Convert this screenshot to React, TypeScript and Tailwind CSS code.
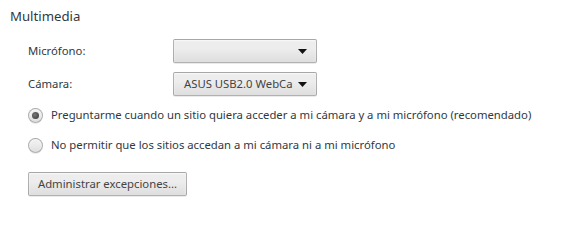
import React from "react";

const ctrl =
  "border border-[rgba(0,0,0,0.25)] rounded-[2px] bg-[linear-gradient(#ededed,#ededed_38%,#dedede)] shadow-[0_1px_0_rgba(0,0,0,0.08),inset_0_1px_2px_rgba(255,255,255,0.75)] text-[#444]";

function Select({ value }: { value: string }) {
  return (
    <div className={`${ctrl} w-[144px] h-[24px] flex items-center pl-[10px] pr-[9px]`}>
      <span className="flex-1 whitespace-nowrap text-[11.3px]">{value}</span>
      <svg width="9" height="5" viewBox="0 0 9 5" className="shrink-0 ml-[4px]">
        <path d="M0 0H9L4.5 5Z" fill="#111" />
      </svg>
    </div>
  );
}

function Radio({ checked, label }: { checked?: boolean; label: string }) {
  return (
    <div className="flex items-center h-[16px]">
      <div className="w-[15px] h-[15px] rounded-full border border-[rgba(0,0,0,0.25)] bg-[linear-gradient(#ededed,#ededed_38%,#dedede)] shadow-[0_1px_0_rgba(0,0,0,0.08),inset_0_1px_2px_rgba(255,255,255,0.75)] flex items-center justify-center">
        {checked && (
          <div className="w-[7px] h-[7px] rounded-full bg-[radial-gradient(circle_at_40%_40%,#777,#333)]" />
        )}
      </div>
      <span className="ml-[8px] text-[11.3px] text-[#303942] whitespace-nowrap">{label}</span>
    </div>
  );
}

export default function App() {
  return (
    <div
      className="w-[561px] h-[206px] bg-white text-[#303942] pl-[10px] pt-[7px]"
      style={{ fontFamily: '"Noto Sans", "Open Sans", sans-serif' }}
    >
      <div className="text-[13.2px] leading-[18px]">Multimedia</div>
      <div className="pl-[18px] mt-[14px] flex flex-col">
        <div className="flex items-center h-[24px]">
          <span className="w-[145px] text-[11.3px]">Micrófono:</span>
          <Select value="" />
        </div>
        <div className="flex items-center h-[24px] mt-[9px]">
          <span className="w-[145px] text-[11.3px]">Cámara:</span>
          <Select value="ASUS USB2.0 WebCa" />
        </div>
        <div className="mt-[11px] flex flex-col gap-[14px]">
          <Radio checked label="Preguntarme cuando un sitio quiera acceder a mi cámara y a mi micrófono (recomendado)" />
          <Radio label="No permitir que los sitios accedan a mi cámara ni a mi micrófono" />
        </div>
        <div className="mt-[17px]">
          <button className={`${ctrl} h-[24px] w-[159px] text-[11.3px]`}>Administrar excepciones...</button>
        </div>
      </div>
    </div>
  );
}
